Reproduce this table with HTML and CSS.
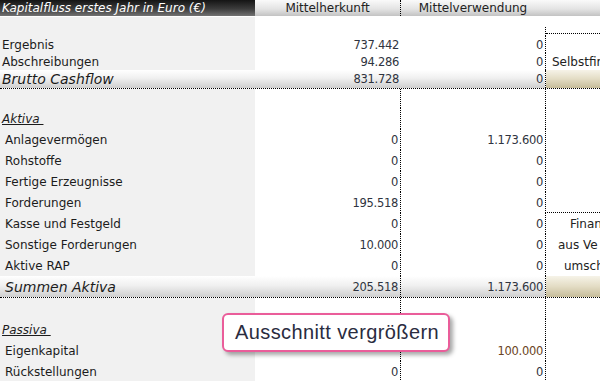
FILE: index.html
```html
<!DOCTYPE html>
<html lang="de">
<head>
<meta charset="utf-8">
<title>Kapitalfluss</title>
<link rel="stylesheet" href="styles.css">
</head>
<body>
<div class="sheet">
  <div class="row head">
    <div class="c title">Kapitalfluss erstes Jahr in Euro (€)</div>
    <div class="c hcol sep">Mittelherkunft</div>
    <div class="c hcol">Mittelverwendung</div>
    <div class="c hcol"></div>
  </div>

  <div class="row h19">
    <div class="c lab"></div>
    <div class="c"></div>
    <div class="c"></div>
    <div class="c side-start"><div class="side-top"></div></div>
  </div>
  <div class="row h17">
    <div class="c lab">Ergebnis</div>
    <div class="c num">737.442</div>
    <div class="c num">0</div>
    <div class="c side"></div>
  </div>
  <div class="row h17">
    <div class="c lab">Abschreibungen</div>
    <div class="c num">94.286</div>
    <div class="c num">0</div>
    <div class="c side"><span class="side-txt s1">Selbstfin</span></div>
  </div>
  <div class="row h19 total">
    <div class="c lab big">Brutto Cashflow</div>
    <div class="c num">831.728</div>
    <div class="c num">0</div>
    <div class="c side beige"></div>
  </div>

  <div class="row h19">
    <div class="c lab"></div>
    <div class="c sep"></div>
    <div class="c"></div>
    <div class="c side"></div>
  </div>
  <div class="row h21">
    <div class="c lab section">Aktiva&nbsp;</div>
    <div class="c sep"></div>
    <div class="c"></div>
    <div class="c side"></div>
  </div>
  <div class="row h21">
    <div class="c lab ind">Anlagevermögen</div>
    <div class="c num sep">0</div>
    <div class="c num">1.173.600</div>
    <div class="c side"></div>
  </div>
  <div class="row h21">
    <div class="c lab ind">Rohstoffe</div>
    <div class="c num sep">0</div>
    <div class="c num">0</div>
    <div class="c side"></div>
  </div>
  <div class="row h21">
    <div class="c lab ind">Fertige Erzeugnisse</div>
    <div class="c num sep">0</div>
    <div class="c num">0</div>
    <div class="c side"></div>
  </div>
  <div class="row h21">
    <div class="c lab ind">Forderungen</div>
    <div class="c num sep">195.518</div>
    <div class="c num">0</div>
    <div class="c side side-end"></div>
  </div>
  <div class="row h21">
    <div class="c lab ind">Kasse und Festgeld</div>
    <div class="c num sep">0</div>
    <div class="c num">0</div>
    <div class="c side"><span class="side-txt s2">Finan</span></div>
  </div>
  <div class="row h21">
    <div class="c lab ind">Sonstige Forderungen</div>
    <div class="c num sep">10.000</div>
    <div class="c num">0</div>
    <div class="c side"><span class="side-txt s3">aus Ve</span></div>
  </div>
  <div class="row h21">
    <div class="c lab ind">Aktive RAP</div>
    <div class="c num sep">0</div>
    <div class="c num">0</div>
    <div class="c side"><span class="side-txt s4">umsch</span></div>
  </div>
  <div class="row h22 total">
    <div class="c lab big ind">Summen Aktiva</div>
    <div class="c num sep">205.518</div>
    <div class="c num">1.173.600</div>
    <div class="c side beige"></div>
  </div>

  <div class="row h21">
    <div class="c lab"></div>
    <div class="c sep"></div>
    <div class="c"></div>
    <div class="c side"></div>
  </div>
  <div class="row h21">
    <div class="c lab section">Passiva&nbsp;</div>
    <div class="c sep"></div>
    <div class="c"></div>
    <div class="c side"></div>
  </div>
  <div class="row h21">
    <div class="c lab ind">Eigenkapital</div>
    <div class="c num sep"></div>
    <div class="c num brown">100.000</div>
    <div class="c side"></div>
  </div>
  <div class="row h21">
    <div class="c lab ind">Rückstellungen</div>
    <div class="c num sep">0</div>
    <div class="c num">0</div>
    <div class="c side"></div>
  </div>

  <div class="tooltip">Ausschnitt vergrößern</div>
</div>
</body>
</html>
```

FILE: styles.css
```css
html, body {
  margin: 0;
  padding: 0;
  background: #ffffff;
}
body {
  font-family: "DejaVu Sans", "Liberation Sans", sans-serif;
  font-size: 12px;
  color: #1c1c1c;
  width: 600px;
  height: 381px;
  overflow: hidden;
}
.sheet {
  position: relative;
  width: 600px;
}
.row {
  display: grid;
  grid-template-columns: 255px 146px 144px 55px;
  box-sizing: border-box;
}
.c {
  box-sizing: border-box;
  overflow: hidden;
  white-space: nowrap;
  display: flex;
  align-items: center;
}
.h17 { height: 17px; }
.h19 { height: 19px; }
.h21 { height: 21px; }
.h22 { height: 22px; }

/* header */
.head { height: 17px; border-bottom: 1px solid #fff; }
.title {
  background: linear-gradient(#141414, #3c3c3c 55%, #727272);
  color: #ffffff;
  font-style: italic;
  font-size: 12px;
  padding-left: 2px;
}
.hcol {
  background: linear-gradient(#fafafa, #e4e4e4 55%, #c3c3c3);
  justify-content: center;
  color: #222;
}
.sep { border-right: 1px dotted #000; }

/* label column */
.lab {
  background: #f1f1f1;
  padding-left: 2px;
}
.ind { padding-left: 5px; }
.big { font-style: italic; font-size: 14px; }
.section { font-style: italic; text-decoration: underline; }

/* numbers */
.num {
  justify-content: flex-end;
  padding-right: 2px;
  color: #2f3440;
  font-size: 11.5px;
  letter-spacing: -0.3px;
}
.brown { color: #6b4424; }

/* totals rows */
.total {
  border-bottom: 1px dotted #000;
}
.total .lab, .total .num {
  background: linear-gradient(#ffffff, #f0f0f0 45%, #cfcfcf);
}
.total .num.sep { border-right: 1px dotted #000; }

/* right side panel */
.side {
  border-left: 1px dotted #000;
  background-clip: padding-box;
}
.side-start {
  align-items: flex-start;
}
.side-top {
  margin-top: 10px;
  height: 9px;
  width: 100%;
  border-left: 1px dotted #000;
  position: relative;
}
.side-top::after {
  content: "";
  position: absolute;
  left: 0;
  right: 0;
  top: 6px;
  border-top: 1px dotted #000;
}
.side-end { border-bottom: 1px dotted #000; }
.beige {
  background: linear-gradient(#f6f3e8, #e3dcc4 50%, #c6bc9a);
  background-clip: padding-box;
}
.side-txt { color: #222; }
.s1 { padding-left: 6px; }
.s2 { padding-left: 24px; }
.s3 { padding-left: 12px; }
.s4 { padding-left: 18px; }

/* tooltip overlay */
.tooltip {
  position: absolute;
  left: 222px;
  top: 313px;
  width: 228px;
  height: 39px;
  box-sizing: border-box;
  border: 2px solid #ea5d9a;
  border-radius: 6px;
  background: #ffffff;
  box-shadow: 3px 3px 4px rgba(0, 0, 0, 0.35);
  font-family: "Liberation Sans", Arial, sans-serif;
  font-size: 20px;
  color: #2a2c40;
  display: flex;
  align-items: center;
  padding-left: 11px;
  letter-spacing: 0.4px;
}
```
